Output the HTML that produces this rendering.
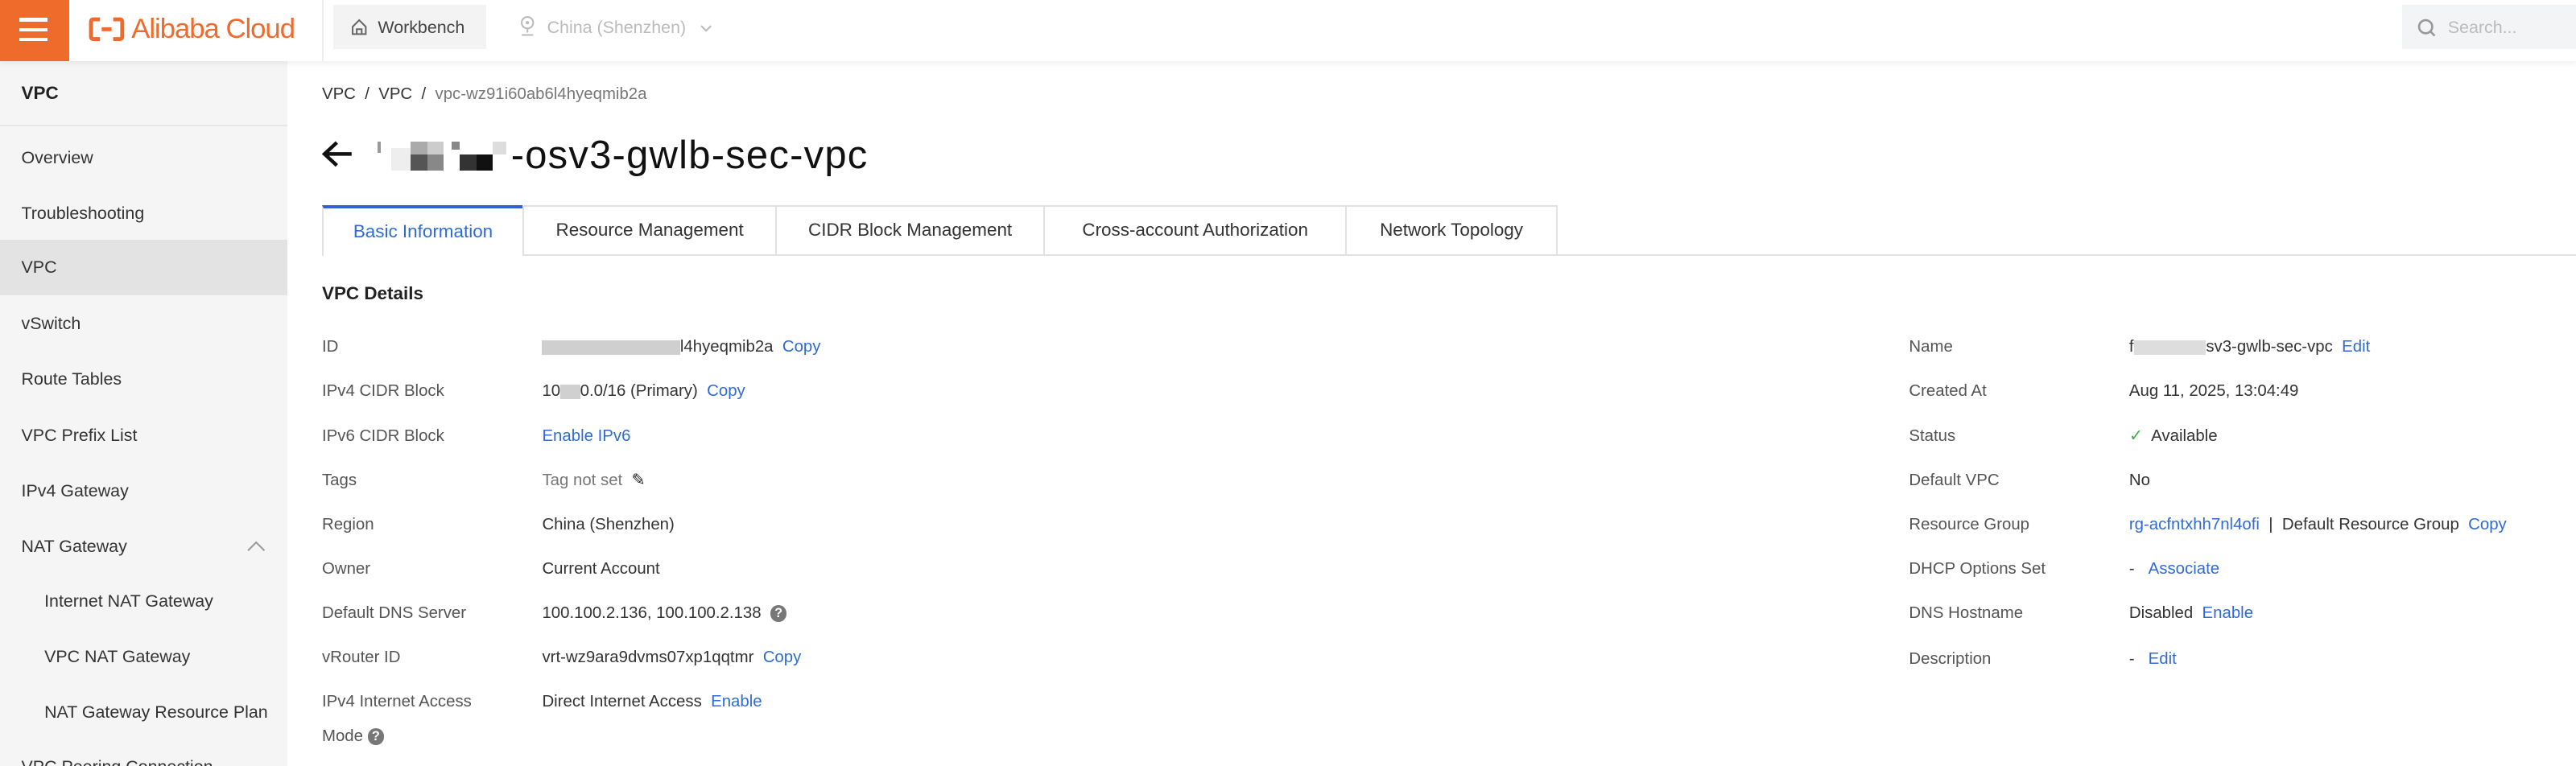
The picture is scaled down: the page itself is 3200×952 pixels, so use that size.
<!DOCTYPE html>
<html><head><meta charset="utf-8">
<style>
html,body{margin:0;padding:0;background:#fff;}
body{width:3200px;height:952px;overflow:hidden;}
#w{zoom:2.0408;width:1568px;height:466.5px;position:relative;font-family:"Liberation Sans",Arial,sans-serif;color:#333;overflow:hidden;background:#fff;}
.a{position:absolute;white-space:nowrap;}
.a svg{display:block;}
.hdr{position:absolute;left:0;top:0;width:1568px;height:37px;background:#fff;box-shadow:0 1px 4px rgba(0,0,0,0.08);z-index:2;}
.side{position:absolute;left:0;top:37px;width:175px;height:430px;background:#f5f5f5;}
.si{position:absolute;left:13px;font-size:10.5px;color:#333;line-height:14px;}
.sub{left:27px;}
.lbl{position:absolute;left:196px;font-size:10px;color:#555;line-height:13px;}
.val{position:absolute;left:330px;font-size:10px;color:#333;line-height:13px;}
.rl{left:1162px;}
.rv{left:1296px;}
.lk{color:#2f6bd6;}
.bl{display:inline-block;background:#c8c8c8;vertical-align:middle;}
.tab{position:absolute;top:125px;height:30px;border:1px solid #e2e2e2;border-bottom:none;box-sizing:border-box;font-size:11px;line-height:28px;text-align:center;color:#333;background:#fff;}
.q{display:inline-block;width:10px;height:10px;border-radius:50%;background:#777;color:#fff;font-size:8px;line-height:10px;text-align:center;font-weight:bold;vertical-align:middle;}
</style></head><body><div id="w">
<div class="hdr">
  <div class="a" style="left:0;top:0;width:42px;height:37px;background:#ef6b2b;"></div>
  <div class="a" style="left:12px;top:11px;width:17px;height:2px;background:#fff;"></div>
  <div class="a" style="left:12px;top:17px;width:17px;height:2px;background:#fff;"></div>
  <div class="a" style="left:12px;top:23px;width:17px;height:2px;background:#fff;"></div>
  <div class="a" style="left:54px;top:10px;width:22px;height:16px;">
    <svg width="22" height="16" viewBox="0 0 22 16"><path d="M7 2H3Q1.5 2 1.5 3.5V12.5Q1.5 14 3 14H7M15 2H19Q20.5 2 20.5 3.5V12.5Q20.5 14 19 14H15M8 8H14" fill="none" stroke="#ef6b2b" stroke-width="2.4"/></svg>
  </div>
  <div class="a" style="left:80px;top:7px;font-size:17px;color:#ef6b2b;letter-spacing:-0.5px;line-height:22px;">Alibaba Cloud</div>
  <div class="a" style="left:196px;top:0;width:1px;height:37px;background:#eee;"></div>
  <div class="a" style="left:203px;top:3px;width:93px;height:27px;background:#f3f3f3;"></div>
  <div class="a" style="left:213px;top:11px;"><svg width="11" height="11" viewBox="0 0 11 11"><path d="M1.5 5.5L5.5 1.5L9.5 5.5V10H1.5Z M4 10V7H7V10" fill="none" stroke="#666" stroke-width="1"/></svg></div>
  <div class="a" style="left:230px;top:10px;font-size:10.5px;color:#444;line-height:14px;">Workbench</div>
  <div class="a" style="left:316px;top:9px;"><svg width="10" height="14" viewBox="0 0 10 14"><circle cx="5" cy="5" r="3.5" fill="none" stroke="#bbb"/><circle cx="5" cy="5" r="1" fill="#bbb"/><path d="M5 8.5V11M1.5 12.5H8.5" stroke="#bbb"/></svg></div>
  <div class="a" style="left:333px;top:10px;font-size:10.5px;color:#bbb;line-height:14px;">China (Shenzhen)</div>
  <div class="a" style="left:426px;top:13px;"><svg width="8" height="8" viewBox="0 0 8 8"><path d="M1 2.5L4 5.5L7 2.5" fill="none" stroke="#bbb"/></svg></div>
  <div class="a" style="left:1462px;top:3px;width:106px;height:27px;background:#f3f4f6;"></div>
  <div class="a" style="left:1471px;top:11px;"><svg width="12" height="12" viewBox="0 0 12 12"><circle cx="5.5" cy="5.5" r="4" fill="none" stroke="#999" stroke-width="1.3"/><path d="M8.5 8.5L11 11" stroke="#999" stroke-width="1.3"/></svg></div>
  <div class="a" style="left:1490px;top:10px;font-size:10.5px;color:#bbb;line-height:14px;">Search...</div>
</div>

<div class="side">
  <div class="si" style="top:13px;font-weight:bold;font-size:11px;color:#222;">VPC</div>
  <div class="a" style="left:0;top:39px;width:175px;height:1px;background:#e8e8e8;"></div>
  <div class="si" style="top:52px;">Overview</div>
  <div class="si" style="top:86px;">Troubleshooting</div>
  <div class="a" style="left:0;top:109px;width:175px;height:34px;background:#e3e3e3;"></div>
  <div class="si" style="top:119px;">VPC</div>
  <div class="si" style="top:153px;">vSwitch</div>
  <div class="si" style="top:187px;">Route Tables</div>
  <div class="si" style="top:221px;">VPC Prefix List</div>
  <div class="si" style="top:255px;">IPv4 Gateway</div>
  <div class="si" style="top:289px;">NAT Gateway</div>
  <div class="a" style="left:150px;top:292px;"><svg width="12" height="8" viewBox="0 0 12 8"><path d="M1 6.5L6 1.5L11 6.5" fill="none" stroke="#999"/></svg></div>
  <div class="si sub" style="top:322px;">Internet NAT Gateway</div>
  <div class="si sub" style="top:356px;">VPC NAT Gateway</div>
  <div class="si sub" style="top:390px;">NAT Gateway Resource Plan</div>
  <div class="si" style="top:423px;">VPC Peering Connection</div>
</div>

<div class="a" style="left:196px;top:51px;font-size:10px;color:#333;line-height:13px;">VPC &nbsp;/&nbsp; VPC &nbsp;/&nbsp; <span style="color:#777;">vpc-wz91i60ab6l4hyeqmib2a</span></div>

<div class="a" style="left:195px;top:85px;"><svg width="20" height="18" viewBox="0 0 20 18"><path d="M19 9H3M10 2L2.5 9L10 16" fill="none" stroke="#111" stroke-width="2.2"/></svg></div>
<div class="a" style="left:230px;top:86px;width:82px;height:18px;">
  <span style="position:absolute;left:0;top:0;width:2px;height:7px;background:#999"></span>
  <span style="position:absolute;left:8px;top:4px;width:12px;height:14px;background:#eee"></span>
  <span style="position:absolute;left:20px;top:0;width:10px;height:8px;background:#aaa"></span>
  <span style="position:absolute;left:20px;top:8px;width:10px;height:10px;background:#555"></span>
  <span style="position:absolute;left:30px;top:0;width:10px;height:8px;background:#ccc"></span>
  <span style="position:absolute;left:30px;top:8px;width:10px;height:10px;background:#888"></span>
  <span style="position:absolute;left:45px;top:0;width:5px;height:5px;background:#888"></span>
  <span style="position:absolute;left:50px;top:8px;width:10px;height:10px;background:#333"></span>
  <span style="position:absolute;left:60px;top:8px;width:10px;height:10px;background:#111"></span>
  <span style="position:absolute;left:70px;top:0;width:8px;height:8px;background:#ddd"></span>
</div>
<div class="a" style="left:311px;top:81px;font-size:24px;color:#111;line-height:28px;letter-spacing:0.6px;">-osv3-gwlb-sec-vpc</div>

<div class="a" style="left:196px;top:155px;width:1372px;height:1px;background:#e2e2e2;"></div>
<div class="tab" style="left:196px;width:123px;border-top:2px solid #2f62d0;color:#2f6bd6;height:31px;">Basic Information</div>
<div class="tab" style="left:318px;width:155px;">Resource Management</div>
<div class="tab" style="left:472px;width:164px;">CIDR Block Management</div>
<div class="tab" style="left:635px;width:185px;">Cross-account Authorization</div>
<div class="tab" style="left:819px;width:129px;">Network Topology</div>

<div class="a" style="left:196px;top:172px;font-size:11px;font-weight:bold;color:#222;line-height:14px;">VPC Details</div>

<div class="lbl" style="top:205px;">ID</div>
<div class="val" style="top:205px;"><span class="bl" style="width:84px;height:9px;background:#cfcfcf"></span>l4hyeqmib2a <span class="lk">&nbsp;Copy</span></div>
<div class="lbl" style="top:232px;">IPv4 CIDR Block</div>
<div class="val" style="top:232px;">10<span class="bl" style="width:12px;height:9px;background:#d0d0d0"></span>0.0/16 (Primary) <span class="lk">&nbsp;Copy</span></div>
<div class="lbl" style="top:259px;">IPv6 CIDR Block</div>
<div class="val lk" style="top:259px;">Enable IPv6</div>
<div class="lbl" style="top:286px;">Tags</div>
<div class="val" style="top:286px;color:#777;">Tag not set &nbsp;<span style="color:#222;">&#9998;</span></div>
<div class="lbl" style="top:313px;">Region</div>
<div class="val" style="top:313px;">China (Shenzhen)</div>
<div class="lbl" style="top:340px;">Owner</div>
<div class="val" style="top:340px;">Current Account</div>
<div class="lbl" style="top:367px;">Default DNS Server</div>
<div class="val" style="top:367px;">100.100.2.136, 100.100.2.138 &nbsp;<span class="q">?</span></div>
<div class="lbl" style="top:394px;">vRouter ID</div>
<div class="val" style="top:394px;">vrt-wz9ara9dvms07xp1qqtmr <span class="lk">&nbsp;Copy</span></div>
<div class="lbl" style="top:421px;">IPv4 Internet Access</div>
<div class="lbl" style="top:442px;">Mode <span class="q">?</span></div>
<div class="val" style="top:421px;">Direct Internet Access <span class="lk">&nbsp;Enable</span></div>

<div class="lbl rl" style="top:205px;">Name</div>
<div class="val rv" style="top:205px;">f<span class="bl" style="width:44px;height:9px;background:#ddd"></span>sv3-gwlb-sec-vpc <span class="lk">&nbsp;Edit</span></div>
<div class="lbl rl" style="top:232px;">Created At</div>
<div class="val rv" style="top:232px;">Aug 11, 2025, 13:04:49</div>
<div class="lbl rl" style="top:259px;">Status</div>
<div class="val rv" style="top:259px;"><span style="color:#3bb34a;">&#10003;</span>&nbsp; Available</div>
<div class="lbl rl" style="top:286px;">Default VPC</div>
<div class="val rv" style="top:286px;">No</div>
<div class="lbl rl" style="top:313px;">Resource Group</div>
<div class="val rv" style="top:313px;"><span class="lk">rg-acfntxhh7nl4ofi</span> &nbsp;| &nbsp;Default Resource Group <span class="lk">&nbsp;Copy</span></div>
<div class="lbl rl" style="top:340px;">DHCP Options Set</div>
<div class="val rv" style="top:340px;">- &nbsp;&nbsp;<span class="lk">Associate</span></div>
<div class="lbl rl" style="top:367px;">DNS Hostname</div>
<div class="val rv" style="top:367px;">Disabled <span class="lk">&nbsp;Enable</span></div>
<div class="lbl rl" style="top:395px;">Description</div>
<div class="val rv" style="top:395px;">- &nbsp;&nbsp;<span class="lk">Edit</span></div>
</div></body></html>
